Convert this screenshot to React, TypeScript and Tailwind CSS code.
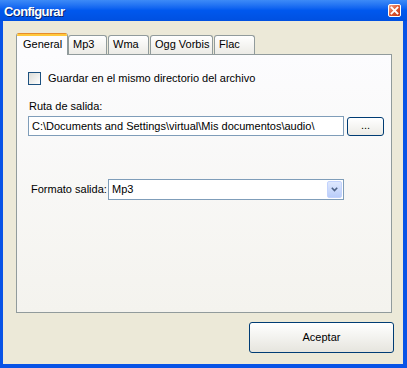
import React from "react";

function CloseButton() {
  return (
    <div className="w-[13px] h-[13px] rounded-[2px] border border-white bg-gradient-to-br from-[#f0a58c] via-[#e0582f] to-[#c1381a] flex items-center justify-center">
      <svg width="9" height="9" viewBox="0 0 9 9">
        <path d="M1.5 1.5 L7.5 7.5 M7.5 1.5 L1.5 7.5" stroke="white" strokeWidth="1.8" strokeLinecap="square" />
      </svg>
    </div>
  );
}

function Tab({ label, width, selected }: { label: string; width: number; selected?: boolean }) {
  if (selected) {
    return (
      <div
        className="relative z-10 h-[22px] mb-[-1px] flex flex-col bg-[#fcfcfe] border-x border-[#919b9c] rounded-t-[3px] overflow-hidden"
        style={{ width }}
      >
        <div className="h-[3px] bg-[#ffc83c] border-t border-[#e68b2c]" />
        <div className="flex-1 flex items-center pl-[6px] pb-[2px]">{label}</div>
      </div>
    );
  }
  return (
    <div
      className="h-[19px] flex items-center pl-[4px] pb-[1px] bg-gradient-to-b from-white to-[#ecebe6] border-x border-t border-[#919b9c] rounded-t-[3px]"
      style={{ width }}
    >
      {label}
    </div>
  );
}

export default function App() {
  return (
    <div className="w-[407px] h-[368px] flex flex-col bg-[#0853e6] font-['Liberation_Sans',Arial,sans-serif] text-[11px] leading-[13px] text-black">
      {/* Title bar */}
      <div className="h-[21px] flex items-center justify-between pl-[4px] pr-[6px] bg-gradient-to-b from-[#3d8bf7] via-[#0058ee] to-[#0050e0]">
        <span className="text-white font-bold text-[13px] tracking-[-0.6px] pt-[1px] [text-shadow:1px_1px_0_#0a246a]">Configurar</span>
        <CloseButton />
      </div>

      {/* Client area */}
      <div className="flex-1 ml-[3px] mr-[4px] mb-[4px] bg-[#ece9d8] flex flex-col">
        <div className="pt-[12px] pl-[13px] pr-[11px]">
          <div className="h-[21px] flex items-end">
            <Tab label="General" width={52} selected />
            <Tab label="Mp3" width={39} />
            <div className="w-[1px]" />
            <Tab label="Wma" width={41} />
            <div className="w-[1px]" />
            <Tab label="Ogg Vorbis" width={63} />
            <div className="w-[1px]" />
            <Tab label="Flac" width={41} />
          </div>

          <div className="h-[259px] border border-[#919b9c] bg-gradient-to-b from-[#fcfcfe] to-[#f4f3ee] pl-[11px] flex flex-col">
            <div className="mt-[17px] flex items-center gap-[7px]">
              <div className="w-[13px] h-[13px] border border-[#1c5180] bg-gradient-to-br from-[#dcdcd7] to-white" />
              <span>Guardar en el mismo directorio del archivo</span>
            </div>

            <div className="mt-[15px] pl-[1px]">Ruta de salida:</div>

            <div className="mt-[3px] flex items-center gap-[3px]">
              <div className="w-[316px] h-[20px] border border-[#7f9db9] bg-white flex items-center pl-[3px]">
                C:\Documents and Settings\virtual\Mis documentos\audio\
              </div>
              <div className="w-[37px] h-[19px] rounded-[3px] border border-[#003c74] bg-gradient-to-b from-white to-[#ecebe6] flex items-center justify-center pb-[2px]">
                ...
              </div>
            </div>

            <div className="mt-[43px] flex items-center">
              <span className="w-[80px] pl-[3px]">Formato salida:</span>
              <div className="w-[236px] h-[21px] border border-[#7f9db9] bg-white flex items-center justify-between pl-[3px] pr-[1px]">
                <span>Mp3</span>
                <div className="w-[15px] h-[17px] rounded-[2px] bg-gradient-to-b from-[#dfe8fd] to-[#b9cdfa] border border-[#c3d3fd] flex items-center justify-center">
                  <svg width="7" height="5" viewBox="0 0 7 5">
                    <path d="M0.8 0.8 L3.5 3.6 L6.2 0.8" fill="none" stroke="#4d6185" strokeWidth="1.6" />
                  </svg>
                </div>
              </div>
            </div>
          </div>
        </div>

        <div className="flex justify-end pr-[9px] pt-[9px]">
          <div className="w-[145px] h-[31px] rounded-[3px] border border-[#003c74] bg-gradient-to-b from-white to-[#e6e5de] flex items-center justify-center">
            Aceptar
          </div>
        </div>
      </div>
    </div>
  );
}
